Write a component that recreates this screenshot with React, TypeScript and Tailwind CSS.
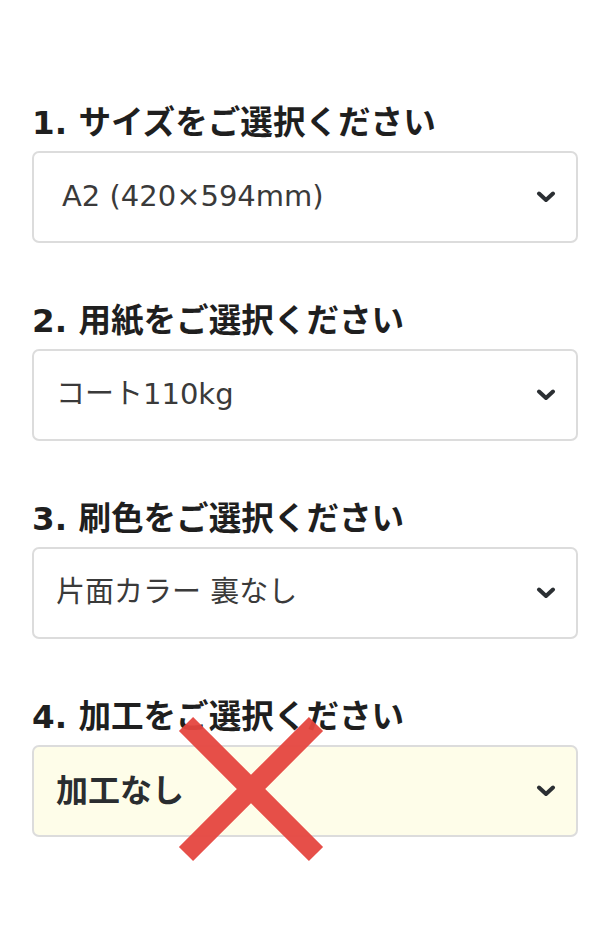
import React from "react";

const font = { fontFamily: '"DejaVu Sans", "Noto Sans CJK JP", sans-serif' };

function Chevron() {
  return (
    <svg width="20" height="12" viewBox="0 0 20 12" className="shrink-0">
      <path d="M3 2.5 L10 9 L17 2.5" fill="none" stroke="#2b2f33" strokeWidth="4" strokeLinecap="round" strokeLinejoin="round" />
    </svg>
  );
}

function Section({ label, value, highlight, indent }: { label: string; value: string; highlight?: boolean; indent?: boolean }) {
  return (
    <div className="flex flex-col">
      <div className="h-[40px] leading-[40px] mb-[8px] text-[32.6px] font-bold text-[#1f1f1f] whitespace-nowrap">{label}</div>
      <div
        className={
          "h-[92px] rounded-[7px] border-2 border-[#dcdcdc] flex items-center justify-between pl-[22px] pr-[20px] " +
          (highlight ? "bg-[#fefde9]" : "bg-white")
        }
      >
        <span
          className={
            (highlight ? "text-[32px] font-bold text-[#2a2d30]" : "text-[29px] text-[#3a3a3a]") +
            (indent ? " pl-[6px]" : "")
          }
        >
          {value}
        </span>
        <Chevron />
      </div>
    </div>
  );
}

export default function App() {
  return (
    <div className="w-[600px] h-[942px] bg-white relative overflow-hidden" style={font}>
      <div className="pt-[103px] pl-[32px] pr-[22px] flex flex-col gap-[58px]">
        <Section label="1. サイズをご選択ください" value="A2 (420×594mm)" indent />
        <Section label="2. 用紙をご選択ください" value="コート110kg" />
        <Section label="3. 刷色をご選択ください" value="片面カラー 裏なし" />
        <Section label="4. 加工をご選択ください" value="加工なし" highlight />
      </div>
      <svg className="absolute left-[176px] top-[714px]" width="150" height="150" viewBox="0 0 150 150">
        <path d="M10 10 L140 140 M140 10 L10 140" stroke="#e5463f" strokeWidth="20" strokeOpacity="0.95" />
      </svg>
    </div>
  );
}
